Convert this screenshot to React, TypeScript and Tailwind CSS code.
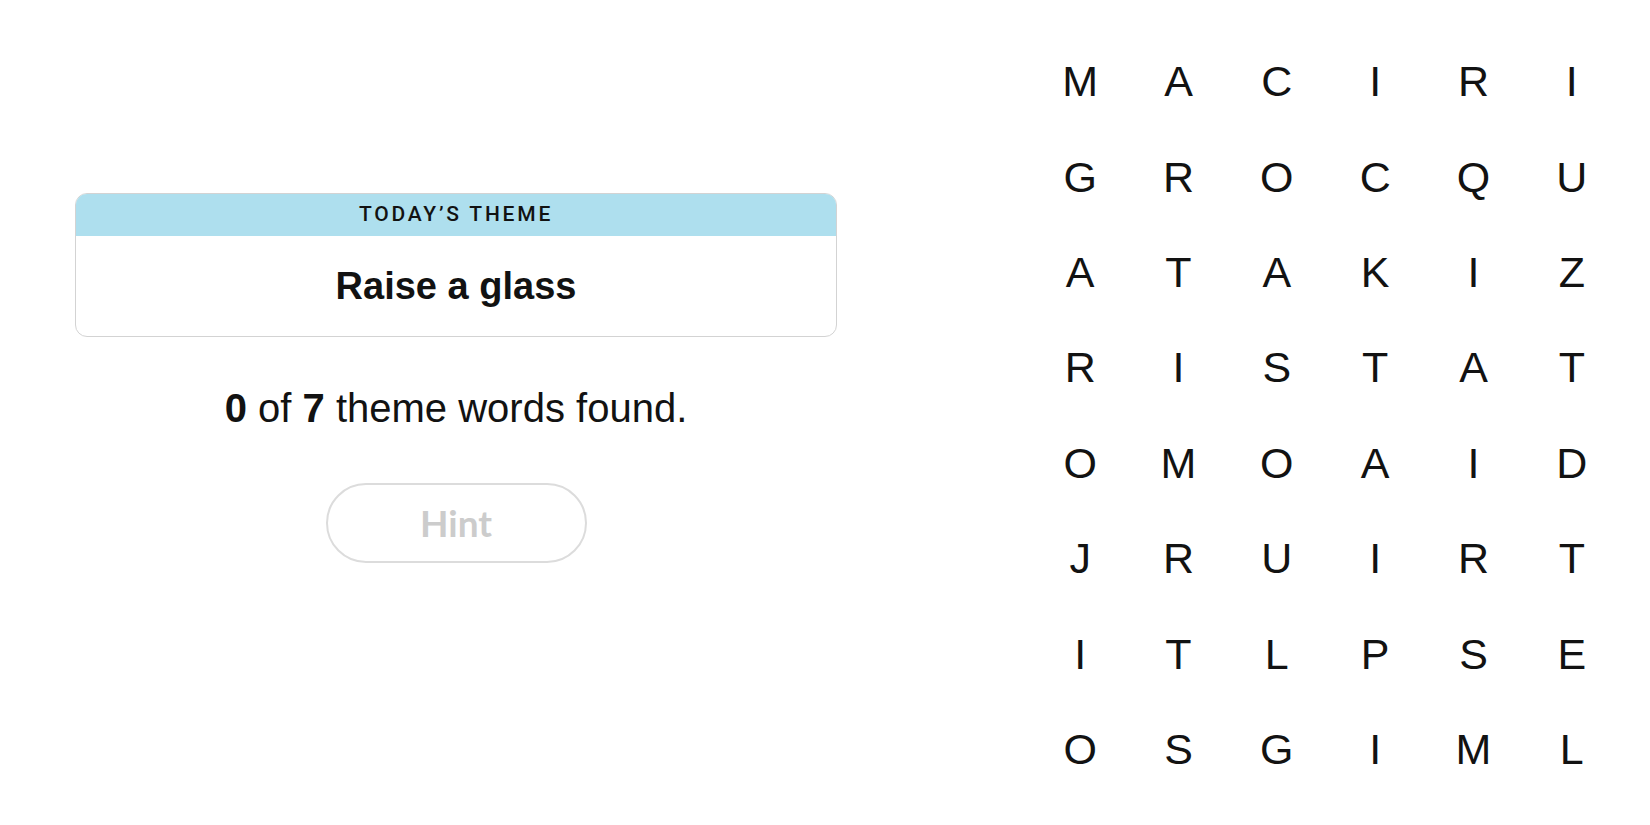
const GRID = [
  ["M", "A", "C", "I", "R", "I"],
  ["G", "R", "O", "C", "Q", "U"],
  ["A", "T", "A", "K", "I", "Z"],
  ["R", "I", "S", "T", "A", "T"],
  ["O", "M", "O", "A", "I", "D"],
  ["J", "R", "U", "I", "R", "T"],
  ["I", "T", "L", "P", "S", "E"],
  ["O", "S", "G", "I", "M", "L"],
];

export default function App() {
  return (
    <div
      className="flex w-full h-[825px] bg-white text-black overflow-hidden"
      style={{ fontFamily: '"Liberation Sans", Arial, sans-serif' }}
    >
      {/* Left: theme + progress */}
      <div className="flex flex-col items-center ml-[75px] mt-[193px] w-[762px] shrink-0">
        <div className="w-full rounded-[12px] border-[1.5px] border-[#d3d3d3] overflow-hidden">
          <div className="h-[42px] bg-[#aedfee] flex items-center justify-center">
            <span
              className="text-[21px] font-medium tracking-[2.8px] uppercase text-[#121212]"
              style={{ fontFamily: 'Roboto, "Liberation Sans", sans-serif' }}
            >
              Today’s Theme
            </span>
          </div>
          <div className="h-[100px] flex items-center justify-center">
            <span className="text-[38px] font-bold text-[#121212]">Raise a glass</span>
          </div>
        </div>

        <p className="mt-[47px] text-[40px] leading-[48px] text-[#121212]">
          <b>0</b> of <b>7</b> theme words found.
        </p>

        <button
          className="mt-[51px] w-[261px] h-[80px] rounded-full border-2 border-[#dcdcdc] bg-white text-[37px] font-bold text-[#cccccc]"
          style={{ fontFamily: 'Lato, "Liberation Sans", sans-serif' }}
        >
          Hint
        </button>
      </div>

      {/* Right: letter grid */}
      <div className="ml-auto mr-[29px] mt-[34px] grid grid-cols-6 w-[590px] auto-rows-[95.4px]">
        {GRID.flat().map((ch, i) => (
          <div
            key={i}
            className="flex items-center justify-center text-[43px] leading-none text-[#121212]"
          >
            {ch}
          </div>
        ))}
      </div>
    </div>
  );
}
